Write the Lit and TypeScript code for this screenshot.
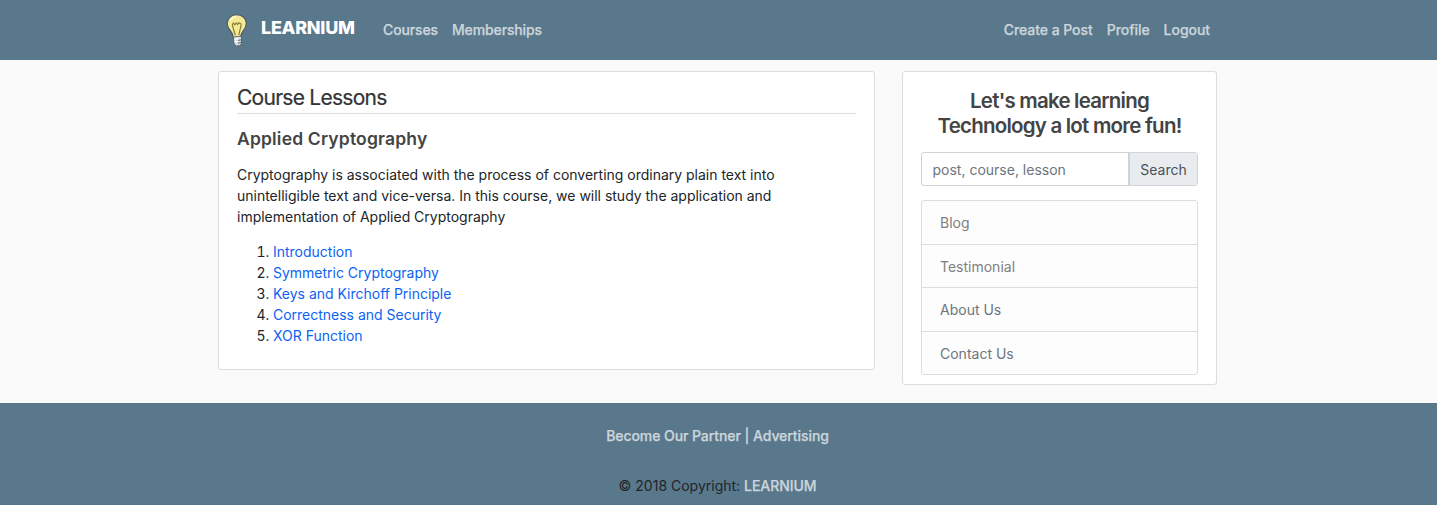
import { LitElement, html, css } from "lit";
import { customElement } from "lit/decorators.js";

const LESSONS = [
  "Introduction",
  "Symmetric Cryptography",
  "Keys and Kirchoff Principle",
  "Correctness and Security",
  "XOR Function",
];

@customElement("app-root")
export class AppRoot extends LitElement {
  static styles = css`
    :host { display: block; height: 505px; background: #fafafa; color: #212529;
      font: 400 14px/21px Inter, "Liberation Sans", sans-serif; overflow: hidden; }
    * { box-sizing: border-box; }
    a { text-decoration: none; color: inherit; }
    header { height: 60px; background: #5a788c; }
    .bar { width: 1001px; margin: 0 auto; height: 60px; padding: 0 9px 0 5px; display: flex;
      align-items: center; color: #cbd5db; font-weight: 500; letter-spacing: -0.13px; }
    .logo { width: 28px; height: 38px; display: block; margin-top: 2px; }
    .brand { color: #fff; font-size: 18px; font-weight: 800; margin: -5px 0 0 10px; width: 122px;
      letter-spacing: -0.28px; }
    .links { display: flex; gap: 14px; margin-top: -1px; -webkit-text-stroke: 0.25px #cbd5db; }
    .right { margin-left: auto; letter-spacing: -0.05px; }
    main { width: 1001px; margin: 0 auto; padding: 11px 2px 0 0; display: flex;
      justify-content: space-between; align-items: flex-start; height: 343px; }
    .card { background: #fff; border: 1px solid #dddddd; border-radius: 3px; padding: 0 18px; }
    .course { width: 657px; height: 299px; }
    h1 { font-size: 21px; line-height: 25px; font-weight: 400; margin: 0; padding: 13px 0 3px;
      border-bottom: 1px solid #dfe0e1; color: #333; letter-spacing: -0.74px;
      -webkit-text-stroke: 0.2px #333; }
    h2 { font-size: 17.5px; line-height: 21px; font-weight: 600; margin: 14px 0 15px; color: #444;
      letter-spacing: 0.18px; }
    p { margin: 0 0 14px; width: 580px; letter-spacing: -0.008px; }
    ol { margin: 0; padding-left: 36px; }
    ol a { color: #0b63f6; letter-spacing: -0.01px; }
    .side { width: 315px; height: 314px; }
    h3 { margin: 16px 0 14px; font-size: 20.5px; line-height: 25px; font-weight: 600;
      text-align: center; color: #444; letter-spacing: -0.78px; }
    .search { display: flex; height: 34px; border: 1px solid #ced4da; border-radius: 3px;
      line-height: 34px; color: #6c757d; }
    .field { flex: 1; padding-left: 10.5px; }
    .btn { width: 69px; border-left: 2px solid #ced4da; background: #e9ecef; color: #495057;
      text-align: center; }
    .menu { margin-top: 14px; display: grid; grid-template-rows: 43px 43px 44px 43px;
      border: 1px solid #dddddd; border-radius: 3px; background: #fdfdfd; }
    .menu a { padding: 11px 18px 0; color: #6c757d; }
    .menu a + a { border-top: 1px solid #dddddd; }
    .menu .plain { color: #808080; }
    footer { background: #5a788c; height: 102px; padding-top: 22px; display: flex;
      flex-direction: column; align-items: center; gap: 29px; padding-right: 2px; }
    footer b { font-weight: 500; color: #cbd5db; letter-spacing: -0.07px;
      -webkit-text-stroke: 0.25px #cbd5db; }
  `;

  render() {
    return html`
      <header>
        <div class="bar">
          <svg class="logo" viewBox="0 0 26 36">
            <path d="M12.500 2.600c-5.100 0-8.800 3.600-8.800 8.400 0 4.700 3.900 6.600 5.300 10.600l.5 2.900 7-.5.3-2.400c.8-3.400 5-5.600 5-10.700 0-4.900-4.200-8.300-9.300-8.300z" fill="#f5e995" stroke="#3f5562" stroke-width="1"/>
            <path d="M7 7.500c1-2 2.700-3 4.800-3" fill="none" stroke="#fffbd2" stroke-width="1.400" stroke-linecap="round"/>
            <path d="M8.500 12.500l3 9.500M17 12l-2.300 10M8.500 12.500l1-2 1.500 1.600 1.200-1.800 1.400 1.600 1.200-1.700 2.400 1.500" fill="none" stroke="#867937" stroke-width="1.100"/>
            <path d="M9.800 23.500l7.400-.6.1 6.800-2 2.800h-2.600l-2.500-2.200z" fill="#d9dde0" stroke="#4d5c66" stroke-width=".8"/>
            <path d="M10.300 25.700l3.500-.2M10.500 28l3.500-.1" stroke="#fff" stroke-width="1.300"/>
            <path d="M14 27l3-.8M14 29.500l3-.8M12.800 32h2.700" stroke="#64717a" stroke-width="1"/>
          </svg>
          <a class="brand">LEARNIUM</a>
          <nav class="links"><a>Courses</a><a>Memberships</a></nav>
          <nav class="links right"><a>Create a Post</a><a>Profile</a><a>Logout</a></nav>
        </div>
      </header>
      <main>
        <section class="card course">
          <h1>Course Lessons</h1>
          <h2>Applied Cryptography</h2>
          <p>Cryptography is associated with the process of converting ordinary plain text into
            unintelligible text and vice-versa. In this course, we will study the application and
            implementation of Applied Cryptography</p>
          <ol>${LESSONS.map((s) => html`<li><a>${s}</a></li>`)}</ol>
        </section>
        <aside class="card side">
          <h3>Let's make learning<br />Technology a lot more fun!</h3>
          <div class="search"><div class="field">post, course, lesson</div><div class="btn">Search</div></div>
          <nav class="menu">
            <a class="plain">Blog</a><a class="plain">Testimonial</a><a>About Us</a><a>Contact Us</a>
          </nav>
        </aside>
      </main>
      <footer>
        <b>Become Our Partner | Advertising</b>
        <div>© 2018 Copyright: <b>LEARNIUM</b></div>
      </footer>`;
  }
}
